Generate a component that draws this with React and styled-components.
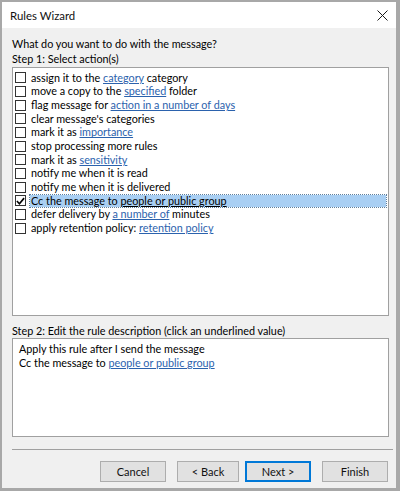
import React from "react";
import styled, { createGlobalStyle } from "styled-components";

const GlobalStyle = createGlobalStyle`
  html, body {
    margin: 0;
    padding: 0;
    width: 400px;
    height: 491px;
    overflow: hidden;
    background: #f0f0f0;
  }
  * { box-sizing: border-box; }
`;

const actions = [
  { parts: ["assign it to the ", { link: "category" }, " category"] },
  { parts: ["move a copy to the ", { link: "specified" }, " folder"] },
  { parts: ["flag message for ", { link: "action in a number of days" }] },
  { parts: ["clear message's categories"] },
  { parts: ["mark it as ", { link: "importance" }] },
  { parts: ["stop processing more rules"] },
  { parts: ["mark it as ", { link: "sensitivity" }] },
  { parts: ["notify me when it is read"] },
  { parts: ["notify me when it is delivered"] },
  { parts: ["Cc the message to ", { link: "people or public group" }], checked: true },
  { parts: ["defer delivery by ", { link: "a number of" }, " minutes"] },
  { parts: ["apply retention policy: ", { link: "retention policy" }] },
];

const App = () => {
  return (
    <>
      <GlobalStyle />
      <Window>
        <TitleBar>
          <Title>Rules Wizard</Title>
          <CloseIcon width="11" height="11" viewBox="0 0 11 11">
            <path d="M0.5 0.5 L10.5 10.5 M10.5 0.5 L0.5 10.5" stroke="#1a1a1a" strokeWidth="1" />
          </CloseIcon>
        </TitleBar>
        <Body>
          <Label>What do you want to do with the message?</Label>
          <Label>Step 1: Select action(s)</Label>
          <ListBox>
            {actions.map((a, i) => (
              <Row key={i}>
                <Check>
                  {a.checked && (
                    <svg width="10" height="10" viewBox="0 0 10 10">
                      <path d="M1 5 L3.8 8 L9 1.8" stroke="#000" strokeWidth="1.8" fill="none" />
                    </svg>
                  )}
                </Check>
                <RowText $selected={a.checked}>
                  {a.parts.map((p, j) =>
                    typeof p === "string" ? (
                      <span key={j}>{p}</span>
                    ) : (
                      <Link key={j} $selected={a.checked}>{p.link}</Link>
                    )
                  )}
                </RowText>
              </Row>
            ))}
          </ListBox>
          <StepTwoLabel>Step 2: Edit the rule description (click an underlined value)</StepTwoLabel>
          <DescBox>
            <DescLine>Apply this rule after I send the message</DescLine>
            <DescLine>
              Cc the message to <Link>people or public group</Link>
            </DescLine>
          </DescBox>
          <Separator />
          <ButtonRow>
            <Button $gap={11}>Cancel</Button>
            <Button $gap={6} $w={62}>&lt; Back</Button>
            <Button $gap={11} $primary>Next &gt;</Button>
            <Button>Finish</Button>
          </ButtonRow>
        </Body>
      </Window>
    </>
  );
};

export default App;

const Window = styled.div`
  width: 400px;
  height: 491px;
  display: flex;
  flex-direction: column;
  border: 2px solid #a8a8a8;
  border-right-width: 4px;
  border-bottom-width: 3px;
  background: #f0f0f0;
  font-family: "Lato", "Open Sans", sans-serif;
  font-size: 10.8px;
  color: #000;
`;

const TitleBar = styled.div`
  height: 26px;
  background: #ffffff;
  display: flex;
  align-items: center;
  justify-content: space-between;
  padding: 0 8px 0 8px;
`;

const Title = styled.div`
  font-size: 11.4px;
  color: #111;
`;

const CloseIcon = styled.svg`
  display: block;
  margin-top: 1px;
`;

const Body = styled.div`
  flex: 1;
  display: flex;
  flex-direction: column;
  padding: 8px 7px 0 10px;
`;

const Label = styled.div`
  line-height: 15px;
  height: 15px;
  white-space: nowrap;
`;

const ListBox = styled.div`
  margin-top: 1px;
  height: 249px;
  background: #ffffff;
  border: 1px solid #a0a0a0;
  padding: 3px 2px 0 2px;
`;

const Row = styled.div`
  display: flex;
  align-items: center;
  height: 13.67px;
`;

const Check = styled.div`
  width: 11px;
  height: 11px;
  border: 1px solid #333;
  background: #fff;
  display: flex;
  align-items: center;
  justify-content: center;
  margin-right: 4px;
  flex-shrink: 0;
`;

const RowText = styled.div`
  flex: 1;
  height: 12px;
  line-height: 11px;
  padding-left: 1px;
  white-space: nowrap;
  background: ${(p) => (p.$selected ? "#a9cff3" : "transparent")};
  outline: ${(p) => (p.$selected ? "1px dotted #5f7f9c" : "none")};
  color: ${(p) => (p.$selected ? "#000" : "inherit")};
`;

const Link = styled.span`
  color: ${(p) => (p.$selected ? "#000" : "#2b62ad")};
  text-decoration: underline;
  text-underline-offset: 1px;
`;

const StepTwoLabel = styled(Label)`
  margin-top: 8px;
  line-height: 14px;
  height: 14px;
`;

const DescBox = styled.div`
  height: 99px;
  background: #ffffff;
  border: 1px solid #a0a0a0;
  padding: 3px 6px 0;
`;

const DescLine = styled.div`
  line-height: 14px;
  white-space: nowrap;
`;

const Separator = styled.div`
  margin-top: 12px;
  margin-right: -4px;
  height: 1px;
  background: #a0a0a0;
`;

const ButtonRow = styled.div`
  margin-top: 11px;
  display: flex;
  justify-content: flex-end;
  padding-right: 1px;
`;

const Button = styled.div`
  width: ${(p) => p.$w || 66}px;
  height: 21px;
  margin-right: ${(p) => p.$gap || 0}px;
  display: flex;
  align-items: center;
  justify-content: center;
  background: #e1e1e1;
  border: ${(p) => (p.$primary ? "2px solid #0078d7" : "1px solid #adadad")};
  font-size: 11px;
  color: #111;
`;
